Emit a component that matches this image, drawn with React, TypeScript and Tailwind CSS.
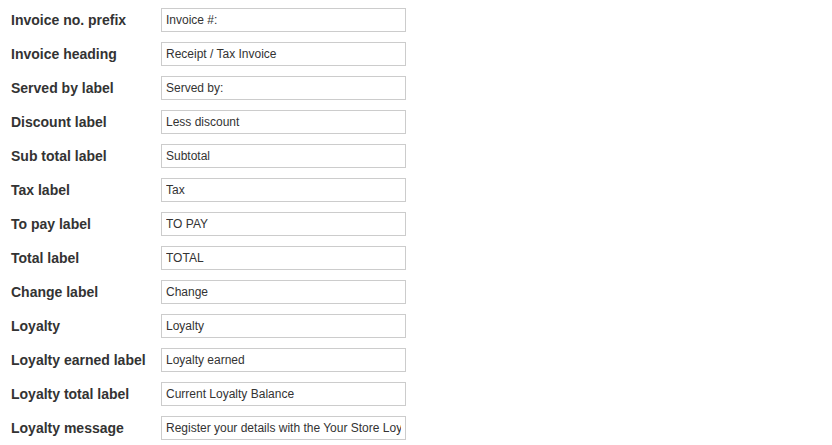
const rows: [string, string][] = [
  ["Invoice no. prefix", "Invoice #:"],
  ["Invoice heading", "Receipt / Tax Invoice"],
  ["Served by label", "Served by:"],
  ["Discount label", "Less discount"],
  ["Sub total label", "Subtotal"],
  ["Tax label", "Tax"],
  ["To pay label", "TO PAY"],
  ["Total label", "TOTAL"],
  ["Change label", "Change"],
  ["Loyalty", "Loyalty"],
  ["Loyalty earned label", "Loyalty earned"],
  ["Loyalty total label", "Current Loyalty Balance"],
  ["Loyalty message", "Register your details with the Your Store Loyalty programme"],
];

export default function App() {
  return (
    <div className="bg-white w-[832px] h-[445px] overflow-hidden pt-[8px] pl-[11px] font-['Liberation_Sans',Arial,sans-serif]">
      {rows.map(([label, value]) => (
        <div key={label} className="flex items-center h-[24px] mb-[10px]">
          <label className="w-[150px] text-[14px] leading-[24px] font-bold text-[#333]">{label}</label>
          <input
            type="text"
            defaultValue={value}
            className="w-[245px] h-[24px] border border-[#ccc] px-[4px] text-[12px] text-[#333] bg-white outline-none"
          />
        </div>
      ))}
    </div>
  );
}
